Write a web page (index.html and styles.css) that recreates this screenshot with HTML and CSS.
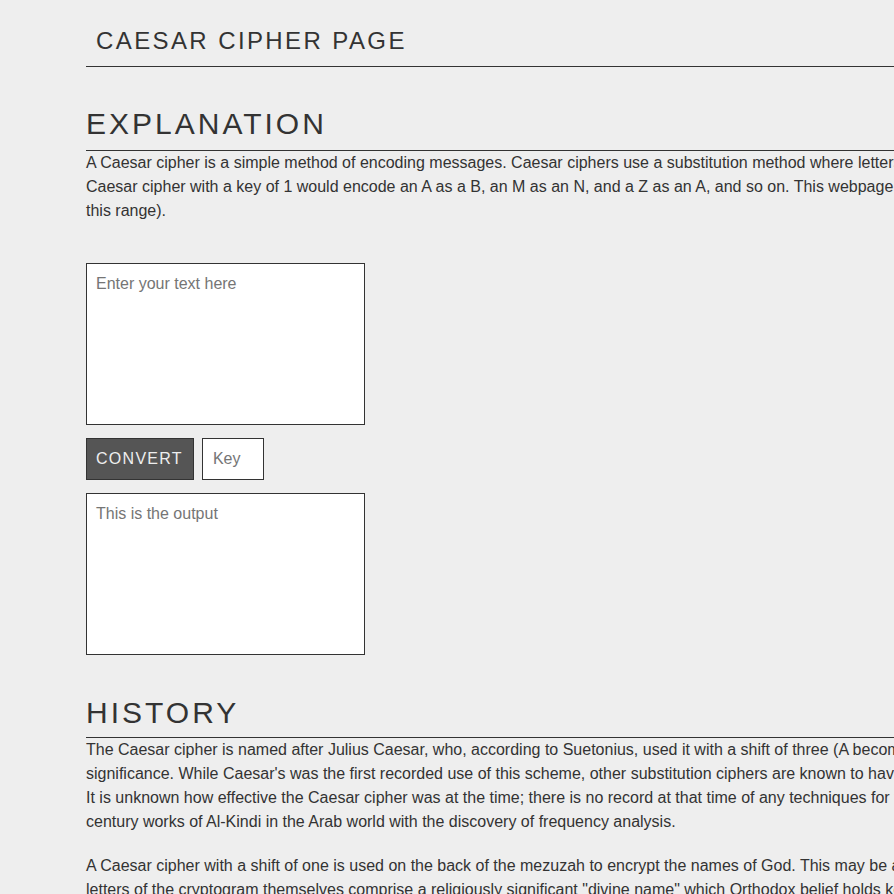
FILE: index.html
```html
<!DOCTYPE html>
<html lang="en">
<head>
<meta charset="utf-8">
<title>Caesar Cipher Page</title>
<link rel="stylesheet" href="styles.css">
</head>
<body>
<div class="page">
  <header class="site-header">
    <h1 class="site-title">CAESAR CIPHER PAGE</h1>
  </header>

  <section class="section">
    <h2 class="section-title">EXPLANATION</h2>
    <p class="text">A Caesar cipher is a simple method of encoding messages. Caesar ciphers use a substitution method where letters in the alphabet are shifted by some fixed number of spaces to yield an encoding alphabet. A Caesar cipher with a key of 1 would encode an A as a B, an M as an N, and a Z as an A, and so on. This webpage allows you to encode text with a key from 1 to 25 (any other keys will be wrapped to fit within this range).</p>
  </section>

  <form class="converter">
    <textarea class="box" placeholder="Enter your text here"></textarea>
    <div class="controls">
      <button type="button" class="convert-btn">CONVERT</button>
      <input type="text" class="key-input" placeholder="Key">
    </div>
    <textarea class="box" placeholder="This is the output" readonly></textarea>
  </form>

  <section class="section">
    <h2 class="section-title tight">HISTORY</h2>
    <p class="text">The Caesar cipher is named after Julius Caesar, who, according to Suetonius, used it with a shift of three (A becoming D when encrypting, and D becoming A when decrypting) to protect messages of military significance. While Caesar's was the first recorded use of this scheme, other substitution ciphers are known to have been used much earlier. His nephew, Augustus, also used the cipher, but with a shift of one. It is unknown how effective the Caesar cipher was at the time; there is no record at that time of any techniques for the solution of simple substitution ciphers. The earliest surviving records date to the 9th-century works of Al-Kindi in the Arab world with the discovery of frequency analysis.</p>
    <p class="text spaced">A Caesar cipher with a shift of one is used on the back of the mezuzah to encrypt the names of God. This may be a holdover from an earlier time when Jewish people were not allowed to have mezuzot. The letters of the cryptogram themselves comprise a religiously significant "divine name" which Orthodox belief holds keeps the forces of evil in check.</p>
  </section>
</div>
</body>
</html>
```

FILE: styles.css
```css
html, body {
  overflow-x: hidden;
}

body {
  margin: 0;
  background: #eeeeee;
  color: #333333;
  font-family: "Liberation Sans", Arial, sans-serif;
  font-size: 16px;
  line-height: 24px;
}

.page {
  width: 1480px;
  margin-left: 86px;
  padding-bottom: 40px;
}

.site-header {
  padding-top: 27px;
  border-bottom: 1px solid #333333;
}

.site-title {
  margin: 0;
  padding: 0 10px 11px;
  font-size: 24px;
  font-weight: normal;
  line-height: 28px;
  letter-spacing: 0.1em;
}

.section {
  margin-top: 39px;
}

.section-title {
  margin: 0;
  padding-bottom: 8px;
  border-bottom: 1px solid #333333;
  font-size: 30px;
  font-weight: normal;
  line-height: 36px;
  letter-spacing: 0.1em;
}

.section-title.tight {
  padding-bottom: 6px;
}

.text {
  margin: 0;
}

.text.spaced {
  margin-top: 20px;
}

.converter {
  display: flex;
  flex-direction: column;
  align-items: flex-start;
  gap: 13px;
  margin-top: 40px;
  margin-bottom: 40px;
}

.converter + .section {
  margin-top: 0;
}

.box {
  box-sizing: border-box;
  width: 279px;
  height: 162px;
  margin: 0;
  padding: 11px 10px 10px 9px;
  border: 1px solid #333333;
  background: #ffffff;
  color: #333333;
  font-family: "Liberation Sans", Arial, sans-serif;
  font-size: 16px;
  resize: none;
}

.box::placeholder,
.key-input::placeholder {
  color: #757575;
}

.controls {
  display: flex;
  gap: 8px;
}

.convert-btn {
  box-sizing: border-box;
  height: 42px;
  margin: 0;
  padding: 10px 10px 10px 9px;
  border: 1px solid #333333;
  background: #555555;
  color: #eeeeee;
  font-family: "Liberation Sans", Arial, sans-serif;
  font-size: 16px;
  line-height: 20px;
  letter-spacing: 0.08em;
}

.key-input {
  box-sizing: border-box;
  width: 62px;
  height: 42px;
  margin: 0;
  padding: 10px;
  border: 1px solid #333333;
  background: #ffffff;
  color: #333333;
  font-family: "Liberation Sans", Arial, sans-serif;
  font-size: 16px;
}
```
